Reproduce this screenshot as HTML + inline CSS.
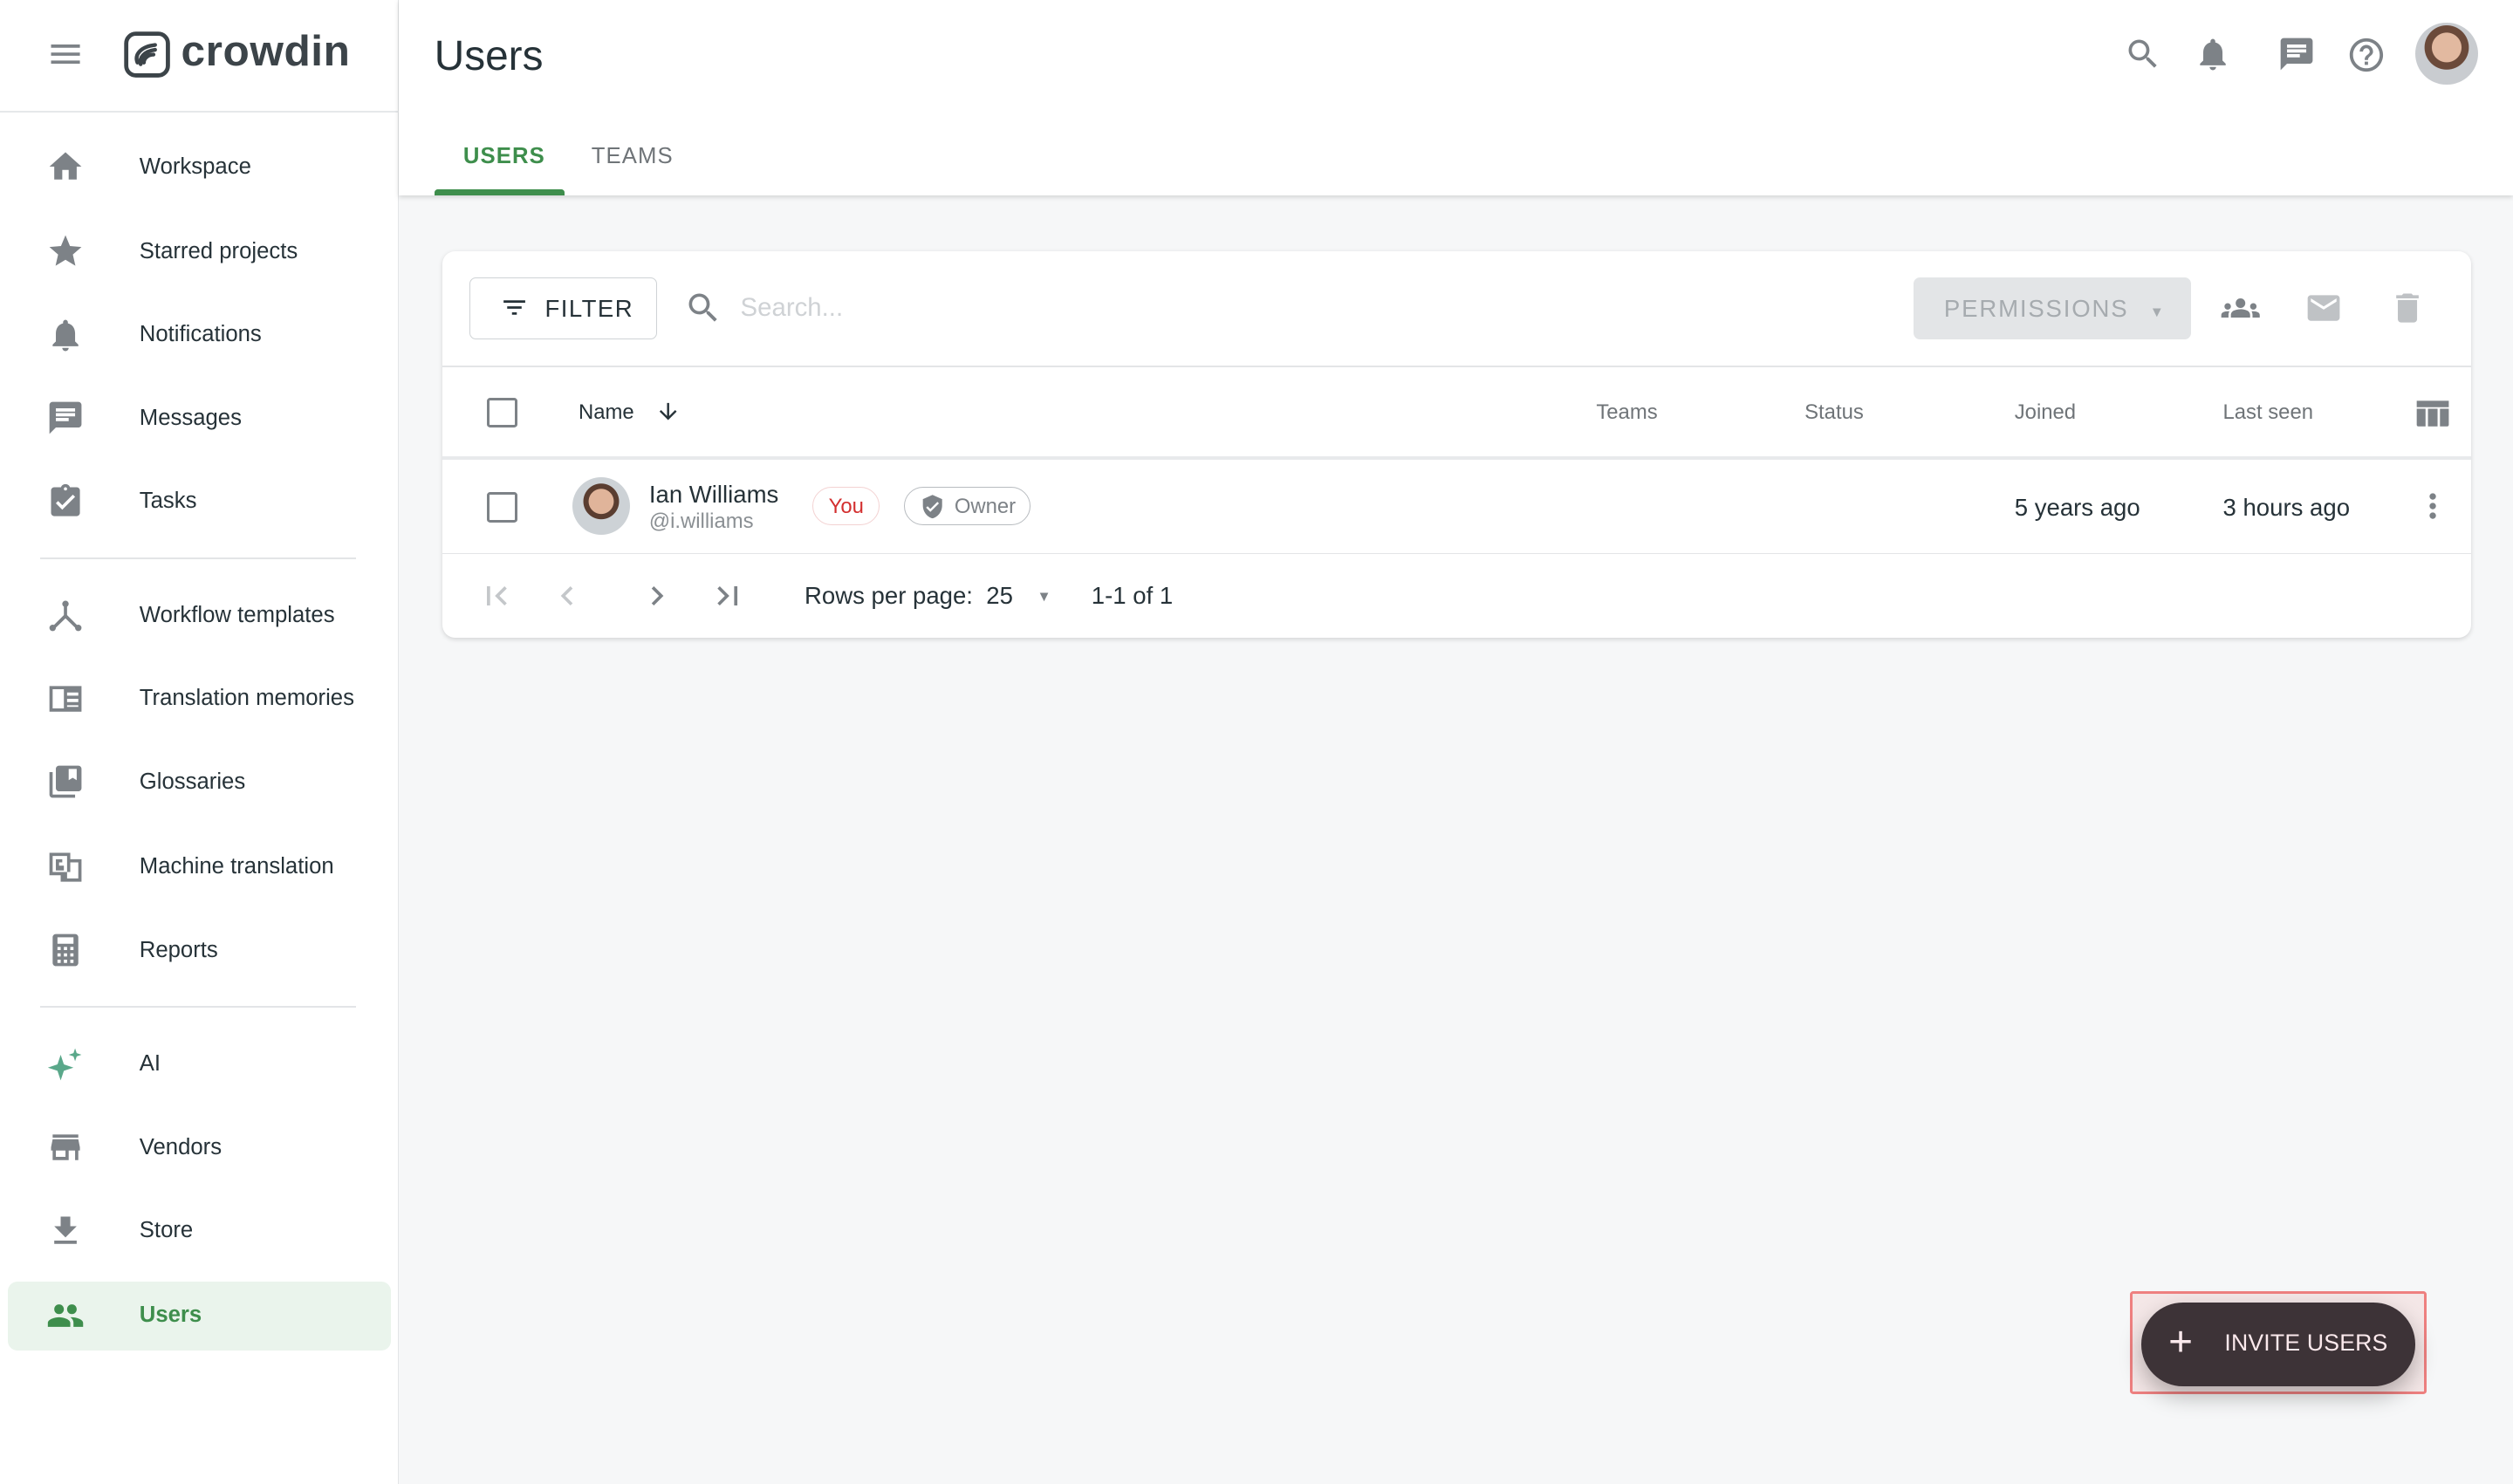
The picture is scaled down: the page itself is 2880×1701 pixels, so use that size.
<!DOCTYPE html>
<html><head><meta charset="utf-8"><style>
html{zoom:1.83673}
*{box-sizing:border-box;margin:0;padding:0}
body{width:1568px;height:926px;overflow:hidden;background:#f6f7f8;font-family:"Liberation Sans",sans-serif;color:#263238;position:relative}
.a{position:absolute}
svg{display:block}
.side{left:0;top:0;width:249px;height:926px;background:#fff;border-right:1px solid #e3e5e7}
.nav{left:0;width:249px;height:44px;display:flex;align-items:center;font-size:14px;color:#263238}
.nav svg{position:absolute;left:29px;width:24px;height:24px;fill:#7d8287}
.nav span{position:absolute;left:87px}
.hr{left:25px;width:197px;height:1px;background:#e3e5e7}
.hdr{left:249px;top:0;width:1319px;height:122px;background:#fff;box-shadow:0 1px 3px rgba(0,0,0,.15)}
.card{left:276px;top:157px;width:1266px;height:241px;background:#fff;border-radius:8px;box-shadow:0 1px 3px rgba(0,0,0,.14)}
.th{font-size:13px;color:#6f7478}
.ic{fill:#7d8287}
</style></head><body>
<div class="a side">
 <svg class="a" style="left:29px;top:22px" width="24" height="24" viewBox="0 0 24 24"><path fill="#7d8287" d="M3 18h18v-2H3v2zm0-5h18v-2H3v2zm0-7v2h18V6H3z"/></svg>
 <svg class="a" style="left:77px;top:19px" width="31" height="31" viewBox="0 0 31 31"><rect x="2" y="2" width="26" height="26" rx="6" fill="none" stroke="#3c4449" stroke-width="2.6"/><path d="M9 20c-2-5 2-10 11-11M11 21c-1-4 2-8 9-9M13 20c0-3 3-5 6-5" fill="none" stroke="#3c4449" stroke-width="2.4" stroke-linecap="round"/></svg>
 <div class="a" style="left:113px;top:16px;font-size:27px;font-weight:bold;color:#3c4449;letter-spacing:.3px">crowdin</div>
 <div class="a" style="left:0;top:69px;width:249px;height:1px;background:#e6e8ea"></div>
 <div class="a nav" style="top:82px"><svg viewBox="0 0 24 24"><path d="M10 20v-6h4v6h5v-8h3L12 3 2 12h3v8z"/></svg><span>Workspace</span></div>
 <div class="a nav" style="top:135px"><svg viewBox="0 0 24 24"><path d="M12 17.3l6.2 3.7-1.6-7 5.4-4.7-7.2-.6L12 2 9.2 8.7 2 9.3l5.4 4.7-1.6 7z"/></svg><span>Starred projects</span></div>
 <div class="a nav" style="top:187px"><svg viewBox="0 0 24 24"><path d="M12 22c1.1 0 2-.9 2-2h-4c0 1.1.9 2 2 2zm6-6v-5c0-3.1-1.6-5.6-4.5-6.3V4c0-.8-.7-1.5-1.5-1.5s-1.5.7-1.5 1.5v.7C7.6 5.4 6 7.9 6 11v5l-2 2v1h16v-1l-2-2z"/></svg><span>Notifications</span></div>
 <div class="a nav" style="top:239px"><svg viewBox="0 0 24 24"><path d="M20 2H4c-1.1 0-2 .9-2 2v18l4-4h14c1.1 0 2-.9 2-2V4c0-1.1-.9-2-2-2zM6 9h12v2H6V9zm8 5H6v-2h8v2zm4-6H6V6h12v2z"/></svg><span>Messages</span></div>
 <div class="a nav" style="top:291px"><svg viewBox="0 0 24 24"><path d="M19 3h-4.2C14.4 1.8 13.3 1 12 1s-2.4.8-2.8 2H5c-1.1 0-2 .9-2 2v14c0 1.1.9 2 2 2h14c1.1 0 2-.9 2-2V5c0-1.1-.9-2-2-2zm-7 0c.6 0 1 .4 1 1s-.4 1-1 1-1-.4-1-1 .4-1 1-1zm-2 14l-4-4 1.4-1.4 2.6 2.6 6.6-6.6L18 9l-8 8z"/></svg><span>Tasks</span></div>
 <div class="a hr" style="top:348px"></div>
 <div class="a nav" style="top:362px"><svg viewBox="0 0 24 24"><circle cx="12" cy="5" r="2"/><circle cx="4" cy="20" r="2"/><circle cx="20" cy="20" r="2"/><path d="M11 5h2v7l7 7-1.4 1.4L12 14l-6.6 6.4L4 19l7-7z"/></svg><span>Workflow templates</span></div>
 <div class="a nav" style="top:414px"><svg viewBox="0 0 24 24"><path d="M2 4h20v16H2zM4 6v12h7V6zm9 2v2h7V8zm0 4v2h7v-2zm0 4v1h7v-1z"/></svg><span>Translation memories</span></div>
 <div class="a nav" style="top:466px"><svg viewBox="0 0 24 24"><path d="M4 6H2v14c0 1.1.9 2 2 2h14v-2H4V6zm16-4H8c-1.1 0-2 .9-2 2v12c0 1.1.9 2 2 2h12c1.1 0 2-.9 2-2V4c0-1.1-.9-2-2-2zm-1 9l-2.5-1.5L14 11V4h5v7z"/></svg><span>Glossaries</span></div>
 <div class="a nav" style="top:519px"><svg viewBox="0 0 24 24"><path d="M2 3h13v4h7v14H9v-4H2zm2 2v10h9V5zm3 2h3v2H8v2h3v3H6V7zm6 8v4h7V9h-5v6z"/></svg><span>Machine translation</span></div>
 <div class="a nav" style="top:571px"><svg viewBox="0 0 24 24"><path d="M6 2h12c1.1 0 2 .9 2 2v16c0 1.1-.9 2-2 2H6c-1.1 0-2-.9-2-2V4c0-1.1.9-2 2-2zm1 2v4h10V4zm0 6v2h2v-2zm4 0v2h2v-2zm4 0v2h2v-2zM7 14v2h2v-2zm4 0v2h2v-2zm4 0v2h2v-2zM7 18v2h2v-2zm4 0v2h2v-2zm4 0v2h2v-2z"/></svg><span>Reports</span></div>
 <div class="a hr" style="top:628px"></div>
 <div class="a nav" style="top:642px"><svg viewBox="0 0 24 24" style="fill:#5aa88a"><path d="M9 6l2 6 6 2-6 2-2 6-2-6-6-2 6-2zM18 2l1 3 3 1-3 1-1 3-1-3-3-1 3-1z"/></svg><span>AI</span></div>
 <div class="a nav" style="top:694px"><svg viewBox="0 0 24 24"><path d="M20 4H4v2h16V4zm1 10v-2l-1-5H4l-1 5v2h1v6h10v-6h4v6h2v-6h1zm-9 4H6v-4h6v4z"/></svg><span>Vendors</span></div>
 <div class="a nav" style="top:746px"><svg viewBox="0 0 24 24"><path d="M19 9h-4V3H9v6H5l7 7 7-7zM5 18v2h14v-2H5z"/></svg><span>Store</span></div>
 <div class="a" style="left:5px;top:800px;width:239px;height:43px;background:#eaf4ec;border-radius:6px"></div>
 <div class="a nav" style="top:799px"><svg viewBox="0 0 24 24" style="fill:#3e8e4c"><path d="M16 11c1.7 0 3-1.3 3-3s-1.3-3-3-3-3 1.3-3 3 1.3 3 3 3zm-8 0c1.7 0 3-1.3 3-3S9.7 5 8 5 5 6.3 5 8s1.3 3 3 3zm0 2c-2.3 0-7 1.2-7 3.5V19h14v-2.5c0-2.3-4.7-3.5-7-3.5zm8 0h-1c1.2.8 2 2 2 3.5V19h6v-2.5c0-2.3-4.7-3.5-7-3.5z"/></svg><span style="color:#3e8e4c;font-weight:bold">Users</span></div>
</div>

<div class="a hdr">
 <div class="a" style="left:22px;top:20px;font-size:26px;color:#263238">Users</div>
 <div class="a" style="left:40px;top:90px;font-size:14px;color:#3e8e4c;font-weight:bold;letter-spacing:.6px">USERS</div>
 <div class="a" style="left:120px;top:90px;font-size:14px;color:#6f7478;letter-spacing:.6px">TEAMS</div>
 <div class="a" style="left:22px;top:118px;width:81px;height:4px;background:#3e8e4c;border-radius:2px 2px 0 0"></div>
 <svg class="a ic" style="left:1076px;top:22px" width="24" height="24" viewBox="0 0 24 24"><path d="M15.5 14h-.8l-.3-.3c1-1.1 1.6-2.6 1.6-4.2a6.5 6.5 0 10-6.5 6.5c1.6 0 3.1-.6 4.2-1.6l.3.3v.8l5 5 1.5-1.5-5-5zm-6 0C7 14 5 12 5 9.5S7 5 9.5 5 14 7 14 9.5 12 14 9.5 14z"/></svg>
 <svg class="a ic" style="left:1120px;top:22px" width="24" height="24" viewBox="0 0 24 24"><path d="M12 22c1.1 0 2-.9 2-2h-4c0 1.1.9 2 2 2zm6-6v-5c0-3.1-1.6-5.6-4.5-6.3V4c0-.8-.7-1.5-1.5-1.5s-1.5.7-1.5 1.5v.7C7.6 5.4 6 7.9 6 11v5l-2 2v1h16v-1l-2-2z"/></svg>
 <svg class="a ic" style="left:1172px;top:22px" width="24" height="24" viewBox="0 0 24 24"><path d="M20 2H4c-1.1 0-2 .9-2 2v18l4-4h14c1.1 0 2-.9 2-2V4c0-1.1-.9-2-2-2zM6 9h12v2H6V9zm8 5H6v-2h8v2zm4-6H6V6h12v2z"/></svg>
 <svg class="a ic" style="left:1215px;top:22px" width="25" height="25" viewBox="0 0 24 24"><path d="M11 18h2v-2h-2v2zm1-16C6.5 2 2 6.5 2 12s4.5 10 10 10 10-4.5 10-10S17.5 2 12 2zm0 18c-4.4 0-8-3.6-8-8s3.6-8 8-8 8 3.6 8 8-3.6 8-8 8zm0-14c-2.2 0-4 1.8-4 4h2c0-1.1.9-2 2-2s2 .9 2 2c0 2-3 1.8-3 5h2c0-2.3 3-2.5 3-5 0-2.2-1.8-4-4-4z"/></svg>
 <div class="a" style="left:1258px;top:14px;width:39px;height:39px;border-radius:50%;background:radial-gradient(circle at 50% 40%,#e2b9a0 0 30%,#6b4a3a 31% 45%,#c9ccd0 46%)"></div>
</div>

<div class="a card">
 <div class="a" style="left:17px;top:16px;width:117px;height:39px;border:1px solid #cfd3d6;border-radius:4px"></div>
 <svg class="a" style="left:36px;top:26px" width="18" height="18" viewBox="0 0 24 24"><path fill="#263238" d="M10 18h4v-2h-4v2zM3 6v2h18V6H3zm3 7h12v-2H6v2z"/></svg>
 <div class="a" style="left:64px;top:27px;font-size:15px;color:#263238;letter-spacing:.8px">FILTER</div>
 <svg class="a ic" style="left:151px;top:23px" width="24" height="24" viewBox="0 0 24 24"><path d="M15.5 14h-.8l-.3-.3c1-1.1 1.6-2.6 1.6-4.2a6.5 6.5 0 10-6.5 6.5c1.6 0 3.1-.6 4.2-1.6l.3.3v.8l5 5 1.5-1.5-5-5zm-6 0C7 14 5 12 5 9.5S7 5 9.5 5 14 7 14 9.5 12 14 9.5 14z"/></svg>
 <div class="a" style="left:186px;top:26px;font-size:16px;color:#cfd2d5">Search...</div>
 <div class="a" style="left:918px;top:16px;width:173px;height:39px;background:#e3e5e7;border-radius:4px;font-size:15px;color:#a6abaf;letter-spacing:1px;padding:11px 0 0 19px">PERMISSIONS <span style="font-size:9px;margin-left:8px">▼</span></div>
 <svg class="a ic" style="left:1108px;top:23px" width="28" height="24" viewBox="0 0 24 24"><path d="M12 12.75c1.6 0 3.1.4 4.3.9 1.1.5 1.7 1.6 1.7 2.7V18H6v-1.6c0-1.2.7-2.2 1.7-2.7 1.2-.5 2.6-.9 4.3-.9zM4 13c1.1 0 2-.9 2-2s-.9-2-2-2-2 .9-2 2 .9 2 2 2zm1.1 1.1C4.8 14 4.4 14 4 14c-1 0-1.900.2-2.800.6C.5 14.9 0 15.6 0 16.4V18h4.5v-1.6c0-.8.2-1.6.6-2.3zM20 13c1.1 0 2-.9 2-2s-.9-2-2-2-2 .9-2 2 .9 2 2 2zm4 3.4c0-.8-.5-1.5-1.2-1.8-.9-.4-1.8-.6-2.8-.6-.4 0-.8 0-1.1.1.4.7.6 1.5.6 2.3V18H24v-1.6zM12 6c1.7 0 3 1.3 3 3s-1.3 3-3 3-3-1.3-3-3 1.3-3 3-3z"/></svg>
 <svg class="a" style="left:1162px;top:23px" width="24" height="24" viewBox="0 0 24 24"><path fill="#bfc2c5" d="M20 4H4c-1.1 0-2 .9-2 2v12c0 1.1.9 2 2 2h16c1.1 0 2-.9 2-2V6c0-1.1-.9-2-2-2zm0 4l-8 5-8-5V6l8 5 8-5v2z"/></svg>
 <svg class="a" style="left:1214px;top:23px" width="24" height="24" viewBox="0 0 24 24"><path fill="#bfc2c5" d="M6 19c0 1.1.9 2 2 2h8c1.1 0 2-.9 2-2V7H6v12zM19 4h-3.5l-1-1h-5l-1 1H5v2h14V4z"/></svg>
 <div class="a" style="left:0;top:71px;width:1266px;height:1px;background:#e3e5e7"></div>
 <div class="a" style="left:28px;top:91px;width:19px;height:19px;border:2px solid #7d8287;border-radius:2px"></div>
 <div class="a th" style="left:85px;top:93px;color:#263238">Name</div>
 <svg class="a" style="left:133px;top:92px" width="16" height="16" viewBox="0 0 24 24"><path fill="#263238" d="M20 12l-1.4-1.4-5.6 5.6V4h-2v12.2l-5.6-5.6L4 12l8 8 8-8z"/></svg>
 <div class="a th" style="left:720px;top:93px">Teams</div>
 <div class="a th" style="left:850px;top:93px">Status</div>
 <div class="a th" style="left:981px;top:93px">Joined</div>
 <div class="a th" style="left:1111px;top:93px">Last seen</div>
 <svg class="a" style="left:1230px;top:89px" width="24" height="24" viewBox="0 0 24 24"><path fill="#7d8287" d="M2 4h20v4H2zm0 5h5.5v11H3c-.6 0-1-.4-1-1zm7 0h6v11H9zm7.5 0H22v10c0 .6-.4 1-1 1h-4.5z"/></svg>
 <div class="a" style="left:0;top:128px;width:1266px;height:2px;background:#e8eaec"></div>
 <div class="a" style="left:28px;top:150px;width:19px;height:19px;border:2px solid #7d8287;border-radius:2px"></div>
 <div class="a" style="left:81px;top:141px;width:36px;height:36px;border-radius:50%;background:radial-gradient(circle at 50% 42%,#e0b49a 0 28%,#5a3d30 29% 40%,#cdd2d6 41%)"></div>
 <div class="a" style="left:129px;top:143px;font-size:15px;color:#263238">Ian Williams</div>
 <div class="a" style="left:129px;top:161px;font-size:13px;color:#8a8f93">@i.williams</div>
 <div class="a" style="left:231px;top:147px;width:42px;height:24px;border:1px solid #f3d2d2;border-radius:12px;font-size:13px;color:#d32f2f;text-align:center;padding-top:4px">You</div>
 <div class="a" style="left:288px;top:147px;width:79px;height:24px;border:1px solid #b8bcc0;border-radius:12px;font-size:13px;color:#7d8287;padding:4px 0 0 31px">Owner</div>
 <svg class="a" style="left:298px;top:151px" width="16" height="16" viewBox="0 0 24 24"><path fill="#7d8287" d="M12 1L3 5v6c0 5.6 3.8 10.7 9 12 5.2-1.3 9-6.4 9-12V5l-9-4zm-2 16l-4-4 1.4-1.4 2.6 2.6 6.6-6.6L18 9l-8 8z"/></svg>
 <div class="a" style="left:981px;top:151px;font-size:15px;color:#263238">5 years ago</div>
 <div class="a" style="left:1111px;top:151px;font-size:15px;color:#263238">3 hours ago</div>
 <svg class="a" style="left:1230px;top:147px" width="24" height="24" viewBox="0 0 24 24"><path fill="#7d8287" d="M12 8c1.1 0 2-.9 2-2s-.9-2-2-2-2 .9-2 2 .9 2 2 2zm0 2c-1.1 0-2 .9-2 2s.9 2 2 2 2-.9 2-2-.9-2-2-2zm0 6c-1.1 0-2 .9-2 2s.9 2 2 2 2-.9 2-2-.9-2-2-2z"/></svg>
 <div class="a" style="left:0;top:188px;width:1266px;height:1px;background:#e3e5e7"></div>
 <svg class="a" style="left:22px;top:203px" width="24" height="24" viewBox="0 0 24 24"><path fill="#c4c7ca" d="M18.4 16.6L13.8 12l4.6-4.6L17 6l-6 6 6 6zM6 6h2v12H6z"/></svg>
 <svg class="a" style="left:66px;top:203px" width="24" height="24" viewBox="0 0 24 24"><path fill="#c4c7ca" d="M15.4 7.4L14 6l-6 6 6 6 1.4-1.4L10.8 12z"/></svg>
 <svg class="a" style="left:122px;top:203px" width="24" height="24" viewBox="0 0 24 24"><path fill="#7d8287" d="M10 6L8.6 7.4 13.2 12l-4.6 4.6L10 18l6-6z"/></svg>
 <svg class="a" style="left:166px;top:203px" width="24" height="24" viewBox="0 0 24 24"><path fill="#7d8287" d="M5.6 7.4L10.2 12l-4.6 4.6L7 18l6-6-6-6zM16 6h2v12h-2z"/></svg>
 <div class="a" style="left:226px;top:206px;font-size:15px;color:#263238">Rows per page:&nbsp; 25</div>
 <div class="a" style="left:371px;top:210px;font-size:9px;color:#7d8287">▼</div>
 <div class="a" style="left:405px;top:206px;font-size:15px;color:#263238">1-1 of 1</div>
</div>

<div class="a" style="left:1329px;top:806px;width:185px;height:64px;border:2px solid #ee8080;border-radius:2px;background:rgba(240,200,200,.35)"></div>
<div class="a" style="left:1336px;top:813px;width:171px;height:52px;border-radius:26px;background:#3d3337;box-shadow:0 6px 14px rgba(0,0,0,.28)">
 <div class="a" style="left:17px;top:13px;font-size:26px;color:#fbe9ec;line-height:24px">+</div>
 <div class="a" style="left:52px;top:17px;font-size:14.5px;color:#fbe9ec;letter-spacing:.1px">INVITE USERS</div>
</div>
</body></html>
